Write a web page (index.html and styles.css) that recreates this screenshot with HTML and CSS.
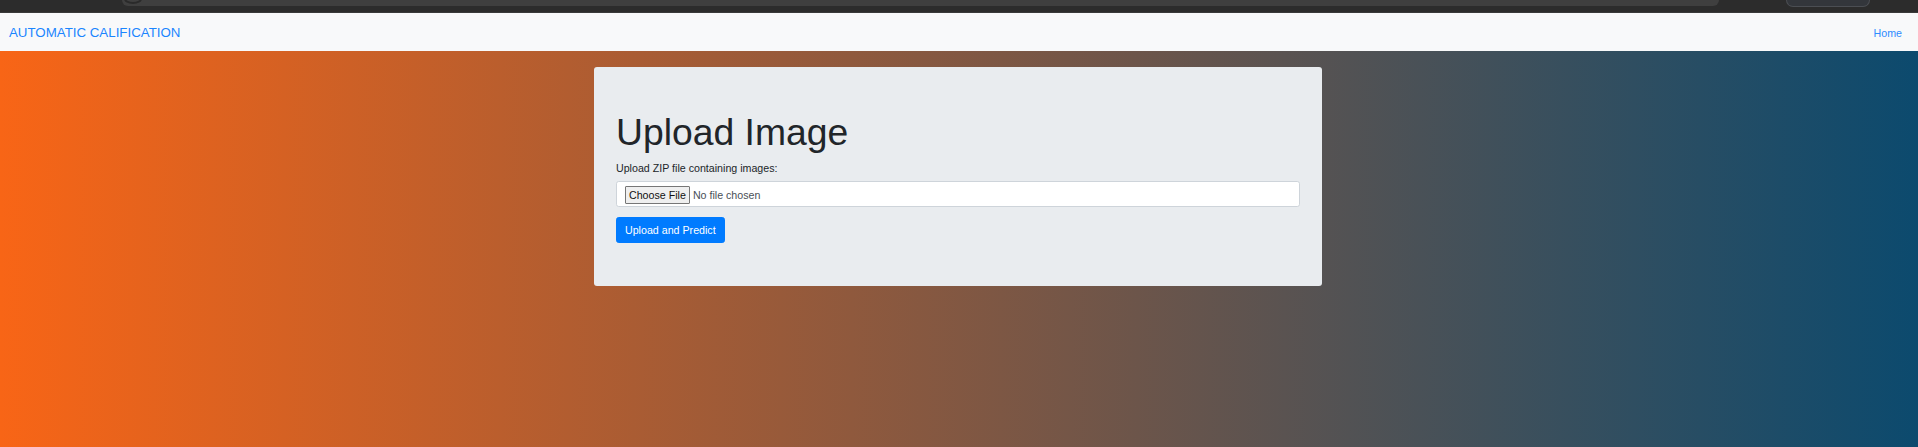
FILE: index.html
```html
<!DOCTYPE html>
<html lang="en">
<head>
<meta charset="utf-8">
<title>Automatic Calification</title>
<link rel="stylesheet" href="styles.css">
</head>
<body>
<div class="chrome">
  <div class="chrome-bar"><span class="chrome-dot"></span></div>
  <div class="chrome-pill"></div>
</div>
<nav class="navbar">
  <a class="brand" href="#">AUTOMATIC CALIFICATION</a>
  <a class="nav-link" href="#">Home</a>
</nav>
<main class="page">
  <section class="jumbo">
    <h1 class="title">Upload Image</h1>
    <form class="form">
      <div class="form-group">
        <label class="label" for="zip">Upload ZIP file containing images:</label>
        <input class="file-input" type="file" id="zip" name="zip">
      </div>
      <button class="btn" type="button">Upload and Predict</button>
    </form>
  </section>
</main>
</body>
</html>
```

FILE: styles.css
```css
* { box-sizing: border-box; }
html, body { margin: 0; padding: 0; }
body {
  font-family: "Liberation Sans", Arial, sans-serif;
  height: 447px;
  overflow: hidden;
  background: linear-gradient(to right, #f86516, #0c4a6e);
  color: #212529;
}
.chrome {
  height: 13px;
  background: #2c2c2c;
  display: flex;
  align-items: flex-start;
  padding-left: 122px;
  border-bottom: 1px solid #3a3a3a;
}
.chrome-bar {
  width: 1597px;
  height: 6px;
  background: #3f3f3f;
  border-radius: 0 0 12px 12px;
  position: relative;
}
.chrome-dot {
  position: absolute;
  left: 2px;
  top: -6px;
  width: 18px;
  height: 10px;
  border-radius: 50%;
  border: 2px solid #2a2a2a;
  border-top: none;
}
.chrome-pill {
  margin-left: 67px;
  width: 84px;
  height: 7px;
  background: #33363b;
  border: 1px solid #4b4e53;
  border-top: none;
  border-radius: 0 0 14px 14px;
}
.navbar {
  height: 38px;
  background: #f8f9fa;
  display: flex;
  justify-content: space-between;
  align-items: center;
  padding: 0 16px 0 9px;
}
.brand {
  font-size: 13.3px;
  line-height: 20px;
  color: #1a85ff;
  text-decoration: none;
  padding-top: 1px;
}
.nav-link {
  font-size: 10.67px;
  line-height: 16px;
  color: #2f8cff;
  text-decoration: none;
  padding-top: 1px;
}
.page {
  display: flex;
  justify-content: center;
  padding-top: 16px;
  padding-right: 2px;
}
.jumbo {
  width: 728px;
  background: #e9ecef;
  border-radius: 3px;
  padding: 43px 22px 43px 22px;
}
.title {
  margin: 0 0 5.3px;
  font-size: 37.3px;
  line-height: 1.2;
  font-weight: 400;
  color: #212529;
}
.form { margin: 0; }
.form-group { margin-bottom: 10.7px; }
.label {
  display: block;
  font-size: 10.67px;
  line-height: 16px;
  margin-bottom: 5.3px;
  color: #212529;
}
.file-input {
  display: block;
  width: 100%;
  height: 25.3px;
  padding: 4px 8px;
  font-family: "Liberation Sans", Arial, sans-serif;
  font-size: 10.67px;
  line-height: 16px;
  color: #495057;
  background: #fff;
  border: 1px solid #ced4da;
  border-radius: 2.7px;
}
.file-input::file-selector-button {
  font-family: "Liberation Sans", Arial, sans-serif;
  font-size: 10.67px;
  padding: 2px 3px;
  margin-right: 3px;
  color: #111;
  background: #efefef;
  border: 1px solid #767676;
  border-radius: 1px;
}
.btn {
  display: inline-block;
  font-family: "Liberation Sans", Arial, sans-serif;
  font-size: 10.67px;
  line-height: 16px;
  padding: 4px 8px;
  color: #fff;
  background: #007bff;
  border: 1px solid #007bff;
  border-radius: 2.7px;
}
```
